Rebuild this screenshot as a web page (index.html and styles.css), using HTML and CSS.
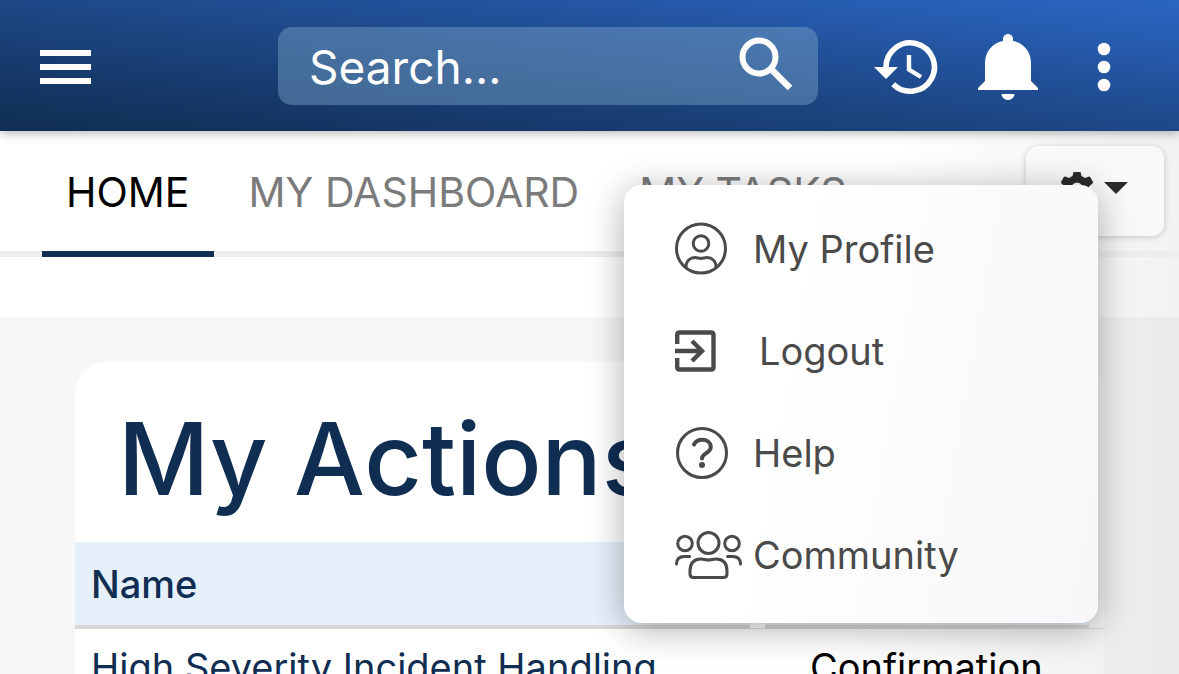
FILE: index.html
```html
<!DOCTYPE html>
<html lang="en">
  <head>
    <meta charset="utf-8" />
    <meta name="viewport" content="width=device-width, initial-scale=1" />
    <title>Home</title>
    <link rel="stylesheet" href="styles.css">
  </head>

  <body>
    <header class="topbar">
      <button class="icon-button" aria-label="Open navigation">
        <svg width="52" height="36" viewBox="0 0 52 36" fill="#fff">
          <path d="M0 1h51v6H0zM0 15h51v6H0zM0 29h51v6H0z"></path>
        </svg>
      </button>
      <form class="search">
        <input type="text" placeholder="Search..." aria-label="Search" />
        <button type="button" class="icon-button" aria-label="Search">
          <svg width="54" height="54" viewBox="0 0 54 54" fill="none" stroke="#fff">
            <circle cx="20" cy="20" r="16.500" stroke-width="6"></circle>
            <path d="M32.500 32.500L51 51" stroke-width="6.500"></path>
          </svg>
        </button>
      </form>
      <div class="topbar-actions">
        <button class="icon-button" aria-label="History">
          <svg width="64" height="56" viewBox="0 0 64 56">
            <path
              d="M12 29V28A24.200 24.200 0 1 1 19.200 45.300"
              fill="none"
              stroke="#fff"
              stroke-width="5.600"
            ></path>
            <path d="M0 28h24L12 40z" fill="#fff"></path>
            <path d="M35 16v14.500l12 7.500" fill="none" stroke="#fff" stroke-width="4.400"></path>
          </svg>
        </button>
        <button class="icon-button" aria-label="Notifications">
          <svg width="60" height="68" viewBox="0 0 60 68" fill="#fff">
            <path
              d="M25 8V6a5 5 0 0 1 10 0v2c11 2 18 11 18 22v18l7 7v2H0v-2l7-7V30C7 19 14 10 25 8z"
            ></path>
            <path d="M23.500 61h13a6.500 6 0 0 1-13 0z"></path>
          </svg>
        </button>
        <button class="icon-button" aria-label="More options">
          <svg width="14" height="50" viewBox="0 0 14 50" fill="#fff">
            <circle cx="7" cy="7" r="6.300"></circle>
            <circle cx="7" cy="25" r="6.300"></circle>
            <circle cx="7" cy="43" r="6.300"></circle>
          </svg>
        </button>
      </div>
    </header>

    <nav class="tabs">
      <a class="tab tab-active" href="#">HOME</a>
      <a class="tab" href="#">MY DASHBOARD</a>
      <a class="tab" href="#">MY TASKS</a>
      <button class="settings" aria-label="Page settings">
        <svg width="34" height="34" viewBox="0 0 34 34">
          <path
            d="M13.500 1h7l1 4 3.500 2 4-1.500q1 0 1.500 1l2.500 4.500q0 1-.5 1.500L29 15.500v3l3.500 3q.5.500.5 1.500L30.500 27q-.5 1-1.500 1l-4-1.500-3.500 2-1 4h-7l-1-4-3.500-2-4 1.500q-1 0-1.500-1L1 23q0-1 .5-1.500l3.500-3v-3l-3.500-3Q1 12 1 11l2.500-4.500q.5-1 1.500-1L9 7l3.500-2z"
            fill="#2b2b2b"
          ></path>
          <circle cx="17" cy="17" r="5.500" fill="#f9f9f9"></circle>
        </svg>
        <svg width="24" height="12" viewBox="0 0 24 12">
          <path d="M0 0h24L12 12z" fill="#2b2b2b"></path>
        </svg>
      </button>
    </nav>

    <main class="content">
      <section class="card">
        <h1>My Actions</h1>
        <table>
          <thead>
            <tr>
              <th scope="col">Name</th>
              <td class="gap"></td>
              <th class="status" scope="col" aria-label="Status"></th>
              <td class="gap"></td>
            </tr>
          </thead>
          <tbody>
            <tr>
              <td><a href="#">High Severity Incident Handling</a></td>
              <td></td>
              <td class="status">Confirmation</td>
              <td></td>
            </tr>
          </tbody>
        </table>
      </section>
    </main>

    <div class="menu">
      <a class="menu-item" href="#">
        <span class="menu-icon">
          <svg width="54" height="54" viewBox="0 0 54 54" fill="none" stroke="#4a4a4a" stroke-width="3">
            <circle cx="26" cy="26.500" r="24.500"></circle>
            <circle cx="26" cy="21.500" r="7.800"></circle>
            <path d="M11 46v-1c0-6 4-9.500 9-9.500 2 0 4 .9 6 .9s4-.9 6-.9c5 0 9 3.500 9 9.500v1"></path>
          </svg>
        </span>
        My Profile
      </a>
      <a class="menu-item menu-item-logout" href="#">
        <span class="menu-icon">
          <svg width="42" height="42" viewBox="0 0 42 42" fill="none" stroke="#4a4a4a" stroke-width="4.400">
            <path d="M2.200 14V5q0-2.500 2.500-2.500H36q2.500 0 2.500 2.500v32q0 2.500-2.500 2.500H4.700q-2.500 0-2.500-2.500v-9"></path>
            <path d="M0 21h27M17 11l10 10-10 10"></path>
          </svg>
        </span>
        Logout
      </a>
      <a class="menu-item" href="#">
        <span class="menu-icon">
          <svg width="54" height="54" viewBox="0 0 54 54" fill="none" stroke="#4a4a4a" stroke-linecap="round">
            <circle cx="27" cy="27" r="24.500" stroke-width="3"></circle>
            <path d="M19 18.500c1.500-3 4.500-4.700 8-4.700 5 0 8.800 2.800 8.800 7.200 0 6-8.800 6.200-8.800 11.500" stroke-width="4"></path>
            <circle cx="27" cy="39" r="3" fill="#4a4a4a" stroke="none"></circle>
          </svg>
        </span>
        Help
      </a>
      <a class="menu-item" href="#">
        <span class="menu-icon">
          <svg width="68" height="50" viewBox="0 0 68 50" fill="none" stroke="#4a4a4a" stroke-width="3" stroke-linecap="round">
            <circle cx="10" cy="13.500" r="7.300"></circle>
            <circle cx="57" cy="13.500" r="7.300"></circle>
            <circle cx="33.500" cy="13" r="10.500"></circle>
            <path d="M1.500 34c0-5 3-7.500 8-7.500h5M65.500 34c0-5-3-7.500-8-7.500h-5"></path>
            <path d="M15 41c0-8 4-12 11-12 3 0 4.500 1 7.500 1s4.500-1 7.500-1c7 0 11 4 11 12v3q0 3.500-3.500 3.500h-30q-3.500 0-3.500-3.500z"></path>
          </svg>
        </span>
        Community
      </a>
    </div>
  </body>
</html>
```
FILE: styles.css
```css
* {
  box-sizing: border-box;
}

:root {
  --navy: #102d52;
  --shade: linear-gradient(to right, transparent 75%, rgba(0, 0, 0, 0.05) 100%);
}

body,
html {
  margin: 0;
  height: 100%;
  overflow: hidden;
}

body {
  font-family: Inter, "Liberation Sans", sans-serif;
  font-size: 38px;
  line-height: 48px;
  color: #000;
  background: var(--shade), #f7f7f7;
}

a {
  color: inherit;
  text-decoration: none;
}

button {
  margin: 0;
  padding: 0;
  border: 0;
  cursor: pointer;
  background: none;
}

svg {
  display: block;
  flex: none;
}

.topbar {
  position: relative;
  z-index: 1;
  display: flex;
  align-items: center;
  justify-content: space-between;
  height: 131px;
  padding: 2px 68px 0 40px;
  background: linear-gradient(to top right, #102d52 0%, #1c4581 45%, #2b66c4 100%);
  box-shadow: 0 2px 10px rgba(0, 0, 0, 0.3);
}

.search {
  display: flex;
  align-items: center;
  width: 540px;
  height: 78px;
  margin: 0 0 2px 130px;
  padding: 0 25px 0 31px;
  border-radius: 14px;
  background: rgba(122, 165, 200, 0.45);
}

.search input {
  flex: 1;
  min-width: 0;
  padding: 2px 0 0;
  border: 0;
  outline: 0;
  color: #fff;
  background: none;
  font: inherit;
  font-size: 46px;
  line-height: 56px;
}

.search input::placeholder {
  color: #fff;
  opacity: 1;
}

.search .icon-button {
  padding-bottom: 3px;
}

.topbar-actions {
  display: flex;
  align-items: center;
  gap: 40px;
}

.topbar-actions .icon-button:last-child {
  margin-left: 19px;
}

.tabs {
  display: flex;
  gap: 10px;
  height: 126px;
  padding: 0 15px 0 42px;
  background: var(--shade), #fff;
  box-shadow: inset 0 -6px #ededed;
}

.tab {
  padding: 37px 25px 35px;
  color: #7b7b7b;
  font-size: 41px;
  white-space: nowrap;
}

.tab-active {
  padding-right: 24px;
  padding-left: 24px;
  color: #000;
  border-bottom: 6px solid var(--navy);
}

.settings {
  display: flex;
  align-items: center;
  justify-content: center;
  gap: 10px;
  width: 138px;
  height: 90px;
  margin: 15px 0 0 auto;
  padding: 0 2px 7px 0;
  border-radius: 12px;
  background: #f9f9f9;
  box-shadow: 0 1px 6px rgba(0, 0, 0, 0.2);
}

.content {
  padding: 105px 75px 0;
  background: var(--shade), linear-gradient(#fff 60px, #f7f7f7 60px);
}

.card {
  overflow: hidden;
  border-radius: 30px 30px 0 0;
  background: var(--shade), #fff;
}

h1 {
  margin: 0;
  padding: 37px 43px 23px;
  color: var(--navy);
  font-size: 100px;
  font-weight: 500;
  line-height: 120px;
}

table {
  width: 100%;
  border-spacing: 0;
  table-layout: fixed;
}

th,
td {
  padding: 16px;
  text-align: left;
  white-space: nowrap;
}

thead th {
  height: 87px;
  color: var(--navy);
  font-weight: 500;
  background: #e6f0fb;
  border-bottom: 4px solid #d8d8d8;
}

tbody td {
  padding-top: 14px;
}

.gap {
  width: 15px;
  padding: 0;
  border-bottom: 1px solid #d8d8d8;
}

.status {
  width: 324px;
  padding-left: 45px;
}

tbody a {
  color: var(--navy);
}

.menu {
  position: absolute;
  z-index: 2;
  top: 185px;
  right: 81px;
  width: 474px;
  padding: 13px 0 17px;
  border-radius: 18px;
  background: linear-gradient(100deg, #fff 30%, #f7f7f9 100%);
  box-shadow: 0 6px 36px rgba(0, 0, 0, 0.32);
}

.menu-item {
  display: flex;
  align-items: center;
  height: 102px;
  padding-left: 51px;
  color: #4a4a4a;
}

.menu-icon {
  width: 78px;
}

.menu-item-logout .menu-icon {
  width: 84px;
}
```
